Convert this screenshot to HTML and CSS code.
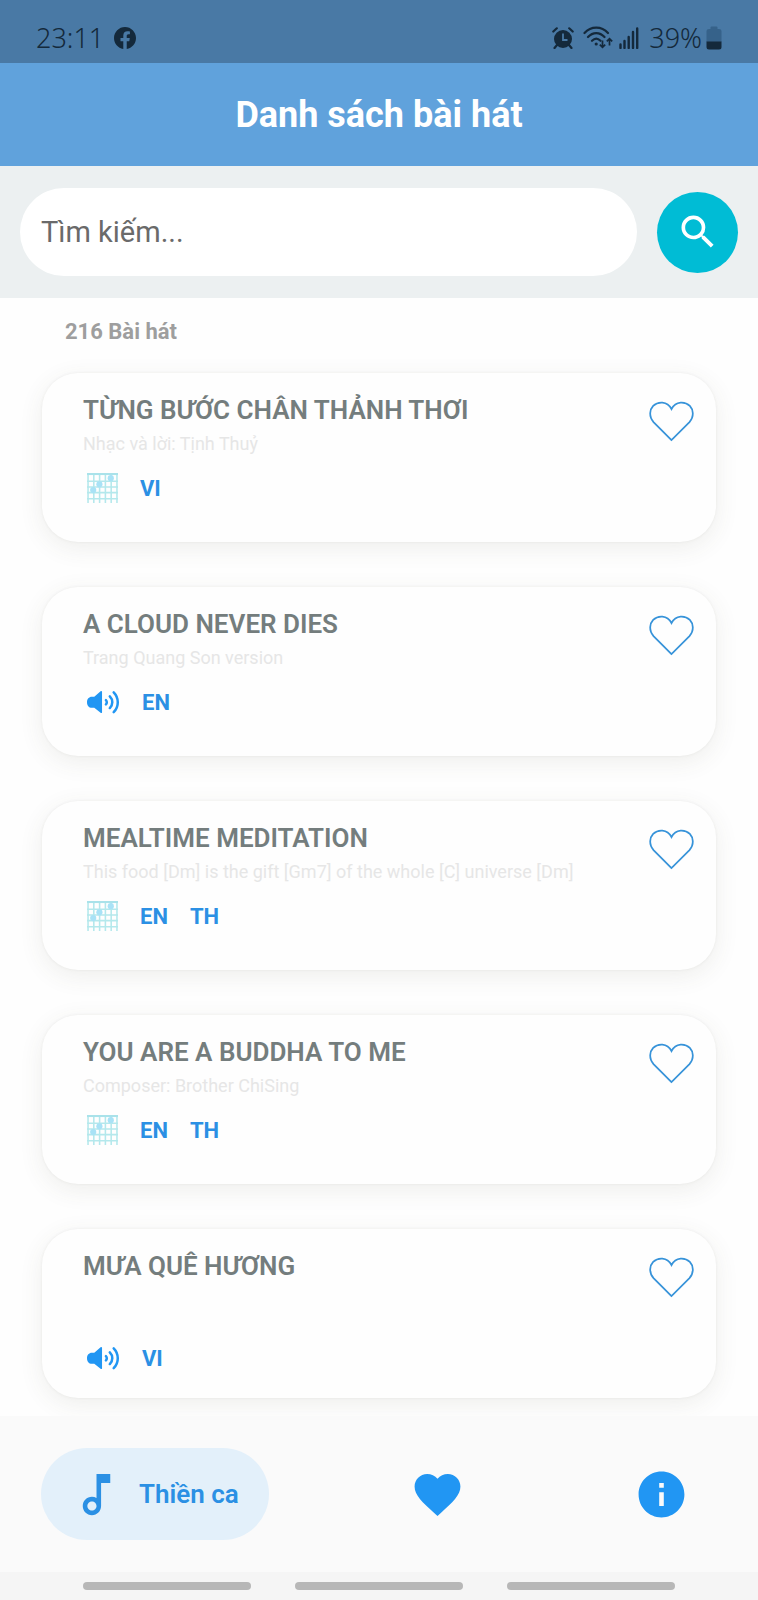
FILE: index.html
```html
<!DOCTYPE html>
<html lang="vi">
<head>
<meta charset="utf-8">
<meta name="viewport" content="width=device-width, initial-scale=1">
<title>Danh sách bài hát</title>
<link rel="stylesheet" href="styles.css">
</head>
<body>
<svg class="sprite" aria-hidden="true">
  <symbol id="heart" viewBox="0 0 46 42"><path d="M23 40 4.600 21.600C-.4 16 .6 8.800 4.200 5 9 .3 18.500-.4 23 8.200 27.500-.4 37 .3 41.800 5c3.600 3.800 4.600 11-.4 16.600Z" fill="none" stroke="currentColor" stroke-width="1.800"/></symbol>
  <symbol id="chord" viewBox="0 0 30 30"><path d="M1 0V29M6.600 0V29M12.200 0V29M17.800 0V29M23.400 0V29M29 0V29M0 1H30M0 8H30M0 13.500H30M0 19H30M0 25H30" fill="none" stroke="#b4e8ec" stroke-width="1.500"/><path d="M0 1H30" stroke="#a9e2ea" stroke-width="2"/><g fill="#a9e2f6"><circle cx="23" cy="5" r="3"/><circle cx="12" cy="11" r="3"/><circle cx="6" cy="16.500" r="3"/></g></symbol>
  <symbol id="volume" viewBox="0 0 34 24"><path d="M15.500 1.500v21c0 .8-.8 1.200-1.500.7L7.500 18H5C2 18 0 15.500 0 12.200S2 6.500 5 6.500h2.500L14 .8c.7-.5 1.500-.1 1.500.7Z" fill="currentColor"/><path d="M19.500 10c1.200 1.200 1.200 3.300 0 4.500M23.500 6.200c3.400 3.400 3.400 8.600 0 12M27.500 2c5.600 5.600 5.600 15 0 20.500" fill="none" stroke="currentColor" stroke-width="2.600" stroke-linecap="round"/></symbol>
</svg>
<div class="app">
  <div class="status">
    <span class="status-text">23:11</span>
    <svg class="fb" viewBox="0 0 24 24" aria-label="Facebook"><path fill="currentColor" d="M24 12.070C24 5.400 18.630 0 12 0S0 5.400 0 12.070C0 18.100 4.390 23.100 10.130 24v-8.440H7.080v-3.490h3.050V9.410c0-3.020 1.790-4.690 4.530-4.690 1.310 0 2.690.23 2.690.23v2.970h-1.510c-1.490 0-1.960.93-1.960 1.890v2.260h3.330l-.53 3.490h-2.800V24C19.610 23.100 24 18.100 24 12.070Z"/></svg>
    <span class="spacer"></span>
    <svg class="alarm" viewBox="0 0 22 22" aria-label="Alarm"><circle cx="11" cy="12" r="9" fill="currentColor"/><path d="M1.300 4.500 4.800 1.300M20.700 4.500 17.200 1.300M5 18 2.500 21M17 18l2.500 3" stroke="currentColor" stroke-width="2.200" stroke-linecap="round"/><path d="M11 6.500V13h4.500" fill="none" stroke="#4979a5" stroke-width="1.800"/></svg>
    <svg class="wifi" viewBox="0 0 30 23" aria-label="Wi-Fi"><path d="M1.500 7C8-.3 18.500-.3 25 7M5 11c4.800-5.300 11.700-5.300 16.500 0M9 14.800c2.600-2.600 5.900-2.600 8.500 0" fill="none" stroke="currentColor" stroke-width="2.200" stroke-linecap="round"/><circle cx="13.200" cy="18" r="1.600" fill="currentColor"/><path d="M19.500 14.500V21M16.800 18.600l2.700 2.700 2.700-2.700M26.500 19.500V13M23.800 15.400l2.700-2.700 2.700 2.700" fill="none" stroke="currentColor" stroke-width="1.700"/></svg>
    <svg class="signal" viewBox="0 0 20 22" aria-label="Signal"><path d="M1.500 21v-3.500M5.500 21v-7M9.700 21V10M14 21V5M18.200 21V1.500" stroke="currentColor" stroke-width="2.400" stroke-linecap="round"/></svg>
    <span class="status-text">39%</span>
    <svg class="battery" viewBox="0 0 16 24" aria-label="Battery"><path d="M4.500 3V1.500Q4.500.5 5.500.5h5q1 0 1 1V3H13q2.500 0 2.500 2v11H.5V5Q.5 3 3 3Z" fill="#36628a"/><path d="M.5 15.500h15V21q0 2.500-2.500 2.500H3Q.5 23.500.5 21Z" fill="currentColor"/></svg>
  </div>
  <header class="header"><h1 class="title">Danh sách bài hát</h1></header>
  <form class="search">
    <input class="search-input" type="text" placeholder="Tìm kiếm..." aria-label="Tìm kiếm">
    <button class="search-button" type="button" aria-label="Tìm kiếm"><svg class="search-icon" viewBox="0 0 24 24"><path fill="currentColor" d="M15.500 14h-.79l-.28-.27A6.471 6.471 0 0 0 16 9.500 6.500 6.500 0 1 0 9.500 16c1.610 0 3.090-.59 4.230-1.570l.27.28v.79l5 4.990L20.490 19l-4.990-5zm-6 0C7.010 14 5 11.990 5 9.500S7.010 5 9.500 5 14 7.010 14 9.500 11.990 14 9.500 14z"/></svg></button>
  </form>
  <main class="songs">
    <p class="count">216 Bài hát</p>
    <article class="card">
      <div class="info"><h2 class="name">TỪNG BƯỚC CHÂN THẢNH THƠI</h2><p class="note">Nhạc và lời: Tịnh Thuỷ</p>
      <div class="tags"><svg class="chord"><use href="#chord"/></svg><span>VI</span></div></div>
      <button class="like" type="button" aria-label="Yêu thích"><svg class="heart"><use href="#heart"/></svg></button>
    </article>
    <article class="card">
      <div class="info"><h2 class="name">A CLOUD NEVER DIES</h2><p class="note">Trang Quang Son version</p>
      <div class="tags"><svg class="volume"><use href="#volume"/></svg><span>EN</span></div></div>
      <button class="like" type="button" aria-label="Yêu thích"><svg class="heart"><use href="#heart"/></svg></button>
    </article>
    <article class="card">
      <div class="info"><h2 class="name">MEALTIME MEDITATION</h2><p class="note">This food [Dm] is the gift [Gm7] of the whole [C] universe [Dm]</p>
      <div class="tags"><svg class="chord"><use href="#chord"/></svg><span>EN</span><span>TH</span></div></div>
      <button class="like" type="button" aria-label="Yêu thích"><svg class="heart"><use href="#heart"/></svg></button>
    </article>
    <article class="card">
      <div class="info"><h2 class="name">YOU ARE A BUDDHA TO ME</h2><p class="note">Composer: Brother ChiSing</p>
      <div class="tags"><svg class="chord"><use href="#chord"/></svg><span>EN</span><span>TH</span></div></div>
      <button class="like" type="button" aria-label="Yêu thích"><svg class="heart"><use href="#heart"/></svg></button>
    </article>
    <article class="card">
      <div class="info"><h2 class="name">MƯA QUÊ HƯƠNG</h2><p class="note"></p>
      <div class="tags"><svg class="volume"><use href="#volume"/></svg><span>VI</span></div></div>
      <button class="like" type="button" aria-label="Yêu thích"><svg class="heart"><use href="#heart"/></svg></button>
    </article>
  </main>
  <nav class="tabs">
    <a class="tab active" href="#songs"><svg class="tab-icon" viewBox="0 0 24 24"><path fill="currentColor" d="M12 3l.01 10.550c-.59-.34-1.270-.55-2-.55C7.790 13 6 14.790 6 17s1.790 4 4.010 4S14 19.210 14 17V7h4V3h-6zm-1.990 16c-1.100 0-2-.9-2-2s.9-2 2-2 2 .9 2 2-.9 2-2 2z"/></svg><span>Thiền ca</span></a>
    <a class="tab" href="#favorites" aria-label="Yêu thích"><svg class="tab-icon" viewBox="0 0 24 24"><path fill="currentColor" d="M12 21.350l-1.450-1.320C5.400 15.360 2 12.280 2 8.500 2 5.420 4.420 3 7.500 3c1.740 0 3.410.81 4.500 2.090C13.090 3.810 14.760 3 16.500 3 19.580 3 22 5.420 22 8.500c0 3.780-3.400 6.860-8.550 11.540L12 21.350z"/></svg></a>
    <a class="tab" href="#about" aria-label="Thông tin"><svg class="tab-icon" viewBox="0 0 24 24"><path fill="currentColor" d="M12 2C6.480 2 2 6.480 2 12s4.480 10 10 10 10-4.480 10-10S17.520 2 12 2zm1 15h-2v-6h2v6zm0-8h-2V7h2v2z"/></svg></a>
  </nav>
  <div class="system"><span></span><span></span><span></span></div>
</div>
</body>
</html>
```
FILE: styles.css
```css
* { box-sizing: border-box; }
body { margin: 0; background: #fefefe; font-family: Roboto, "Noto Sans", sans-serif; }
h1, h2, p { margin: 0; }
svg { flex: none; display: block; }
button { border: 0; padding: 0; cursor: pointer; }
a { text-decoration: none; }
.sprite { display: none; }
.app { min-height: 100vh; display: flex; flex-direction: column; }

.status { display: flex; align-items: center; height: 63px; padding: 12px 36px 0 36px; background: #4979a5; color: #14293b; }
.status-text { font-family: "Noto Sans", sans-serif; font-weight: 300; font-size: 27px; line-height: 32px; }
.fb { width: 22px; height: 22px; margin-left: 10px; }
.spacer { flex: 1; }
.alarm { width: 22px; height: 22px; }
.wifi { width: 30px; height: 23px; margin-left: 9px; }
.signal { width: 20px; height: 22px; margin: 0 10px 0 6px; }
.battery { width: 16px; height: 24px; margin-left: 4px; }

.header { display: flex; align-items: center; justify-content: center; height: 103px; background: #60a2dc; }
.title { color: #fff; font-size: 36px; line-height: 44px; font-weight: 700; }

.search { display: flex; align-items: center; gap: 20px; height: 132px; padding: 0 20px; background: #ecf0f1; }
.search-input { flex: 1; min-width: 0; height: 88px; padding: 0 21px; border: 0; border-radius: 44px; background: #fff; color: #6a6a6a; font: 400 29px/36px Roboto, sans-serif; }
.search-input::placeholder { color: #6a6a6a; opacity: 1; }
.search-button { display: grid; place-items: center; width: 81px; height: 81px; border-radius: 50%; background: #00bcd5; color: #fff; }
.search-icon { width: 44px; height: 44px; }

.songs { flex: 1; display: flex; flex-direction: column; gap: 45px; padding: 20px 42px 18px; }
.count { margin: 0 23px -17px; color: #9e9e9e; font-size: 22px; line-height: 27px; font-weight: 700; }
.card { display: flex; justify-content: space-between; align-items: flex-start; min-height: 169px; padding: 20px 22px 20px 41px; border-radius: 36px; background: #fefefe; box-shadow: 0 0 3px rgba(80, 80, 60, .08), 0 6px 24px rgba(80, 80, 60, .09); }
.name { color: #747d7d; font-size: 26px; line-height: 34px; font-weight: 600; }
.note { color: #e6e6e6; font-size: 18px; line-height: 34px; }
.note:empty { min-height: 48px; }
.tags { display: flex; align-items: center; gap: 22px; height: 34px; margin-top: 10px; padding-left: 4px; color: #2b90e4; font-size: 22px; font-weight: 700; }
.chord { width: 31px; height: 31px; }
.volume { width: 33px; height: 24px; color: #2196f3; }
.like { margin-top: 8px; background: none; color: #3793d9; }
.heart { width: 45px; height: 41px; }

.tabs { display: flex; justify-content: space-between; align-items: center; height: 156px; padding: 0 41px; background: #fafafa; }
.tab { display: flex; align-items: center; gap: 15px; height: 92px; padding: 0 28px; border-radius: 46px; color: #2196f3; font-size: 26px; font-weight: 600; }
.active { padding-right: 30px; background: #e3f0fa; color: #2b90e4; }
.tab-icon { width: 55px; height: 55px; }

.system { display: flex; justify-content: center; align-items: center; gap: 44px; height: 28px; background: #f5f5f5; }
.system span { width: 168px; height: 8px; border-radius: 4px; background: #b7b7b7; }
```
